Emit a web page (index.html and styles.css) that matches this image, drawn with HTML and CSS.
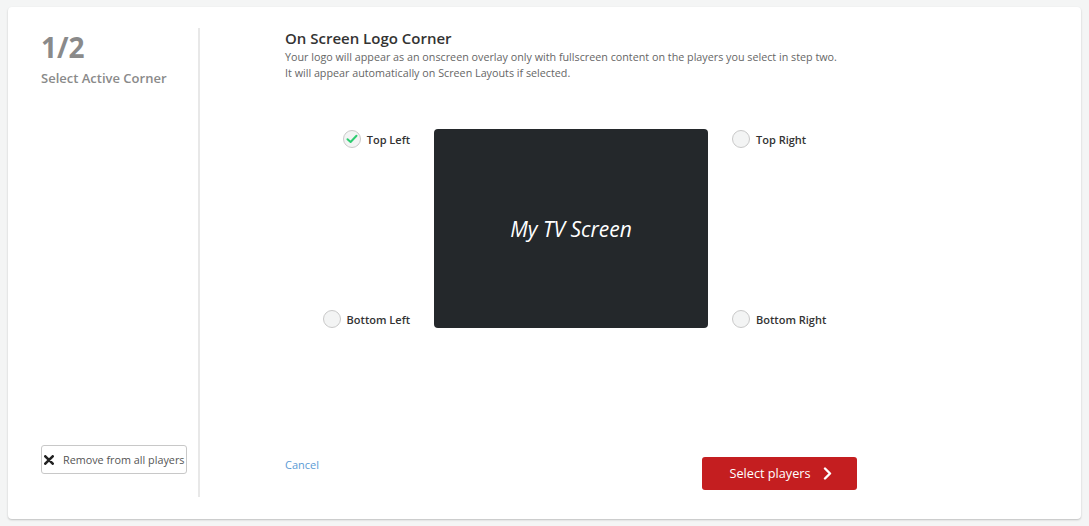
FILE: index.html
```html
<!DOCTYPE html>
<html lang="en">
<head>
    <meta charset="UTF-8">
    <title>On Screen Logo Corner</title>
    <link rel="stylesheet" href="styles.css">
</head>
<body>
    <div class="wizard-card">
        <!-- step sidebar -->
        <div class="step-side">
            <div class="step-info">
                <div class="step-count">1/2</div>
                <div class="step-name">Select Active Corner</div>
            </div>
            <button class="remove-button">
                <svg class="remove-icon" width="10" height="10" viewBox="0 0 10 10">
                    <path d="M1.3 1.3 L8.7 8.7 M8.7 1.3 L1.3 8.7" stroke="#222" stroke-width="2.6" stroke-linecap="round"/>
                </svg>
                Remove from all players
            </button>
        </div>

        <!-- main step content -->
        <div class="step-main">
            <h2 class="step-title">On Screen Logo Corner</h2>
            <p class="step-desc">Your logo will appear as an onscreen overlay only with fullscreen content on the players you select in step two.<br>It will appear automatically on Screen Layouts if selected.</p>

            <div class="corner-picker">
                <div class="corner-col left">
                    <label class="corner-option">
                        <span class="radio checked">
                            <svg width="12" height="10" viewBox="0 0 12 10">
                                <path d="M1.5 5.2 L4.6 8 L10.5 1.8" fill="none" stroke="#2ecc71" stroke-width="2" stroke-linecap="round" stroke-linejoin="round"/>
                            </svg>
                        </span>
                        Top Left
                    </label>
                    <label class="corner-option">
                        <span class="radio"></span>
                        Bottom Left
                    </label>
                </div>
                <div class="tv-screen">My TV Screen</div>
                <div class="corner-col right">
                    <label class="corner-option">
                        <span class="radio"></span>
                        Top Right
                    </label>
                    <label class="corner-option">
                        <span class="radio"></span>
                        Bottom Right
                    </label>
                </div>
            </div>

            <div class="step-actions">
                <a class="cancel-link" href="#">Cancel</a>
                <button class="next-button">
                    Select players
                    <svg width="9" height="13" viewBox="0 0 9 13">
                        <path d="M2 1.5 L7 6.5 L2 11.5" fill="none" stroke="#fff" stroke-width="2.4" stroke-linecap="round" stroke-linejoin="round"/>
                    </svg>
                </button>
            </div>
        </div>
    </div>
</body>
</html>
```

FILE: styles.css
```css
/* base */
* {
    box-sizing: border-box;
}
body {
    margin: 0;
    background-color: #f4f5f5;
    font-family: "Open Sans", "Liberation Sans", Arial, sans-serif;
    color: #333;
}
button {
    font-family: inherit;
    cursor: pointer;
}

/* card */
.wizard-card {
    margin: 7px 8px;
    height: 512px;
    background-color: #fff;
    border-radius: 4px;
    box-shadow: 0 1px 2px rgba(0, 0, 0, 0.22);
    display: flex;
    padding: 21px 0 22px 0;
}

/* sidebar */
.step-side {
    width: 192px;
    padding-left: 33px;
    border-right: 2px solid #e8e8e8;
    display: flex;
    flex-direction: column;
    justify-content: space-between;
}
.step-count {
    font-size: 28px;
    line-height: 38px;
    font-weight: 700;
    color: #8a8a8a;
}
.step-name {
    margin-top: 2px;
    font-size: 13px;
    line-height: 20px;
    font-weight: 600;
    color: #8a8a8a;
}
.remove-button {
    width: 146px;
    height: 29px;
    margin-bottom: 23px;
    padding: 0 0 0 2px;
    background-color: #fff;
    border: 1px solid #c8c8c8;
    border-radius: 3px;
    display: flex;
    align-items: center;
    font-size: 10.8px;
    color: #555;
    white-space: nowrap;
}
.remove-icon {
    flex-shrink: 0;
    margin-right: 9px;
}

/* main */
.step-main {
    width: 657px;
    padding-left: 85px;
    display: flex;
    flex-direction: column;
}
.step-title {
    margin: 0;
    font-size: 15px;
    line-height: 20px;
    font-weight: 600;
    color: #333;
}
.step-desc {
    margin: 1px 0 0 0;
    font-size: 10.75px;
    line-height: 16px;
    color: #666;
}

/* corner picker */
.corner-picker {
    margin-top: 48px;
    display: flex;
}
.corner-col {
    width: 149px;
    display: flex;
    flex-direction: column;
    justify-content: space-between;
}
.corner-col.left {
    align-items: flex-end;
    padding-right: 24px;
}
.corner-col.right {
    align-items: flex-start;
    padding-left: 24px;
}
.corner-option {
    height: 20px;
    display: flex;
    align-items: center;
    font-size: 11px;
    font-weight: 600;
    color: #333;
    cursor: pointer;
}
.corner-option:last-child {
    margin-bottom: -1px;
}
.radio {
    width: 18px;
    height: 18px;
    margin-right: 6px;
    border-radius: 50%;
    border: 1px solid #c9c9c9;
    background-color: #f3f4f4;
    display: flex;
    align-items: center;
    justify-content: center;
}
.tv-screen {
    width: 274px;
    height: 199px;
    background-color: #24282b;
    border-radius: 4px;
    display: flex;
    align-items: center;
    justify-content: center;
    color: #fff;
    font-size: 21px;
    font-style: italic;
}

/* actions */
.step-actions {
    margin-top: auto;
    margin-bottom: 7px;
    display: flex;
    justify-content: space-between;
    align-items: flex-start;
}
.cancel-link {
    font-size: 11px;
    line-height: 16px;
    color: #5b9bd5;
    text-decoration: none;
}
.next-button {
    width: 155px;
    height: 33px;
    padding: 0 0 1px 2px;
    background-color: #c41e20;
    border: none;
    border-radius: 3px;
    color: #fff;
    font-size: 12.7px;
    display: flex;
    align-items: center;
    justify-content: center;
}
.next-button svg {
    margin-left: 12px;
}
```
